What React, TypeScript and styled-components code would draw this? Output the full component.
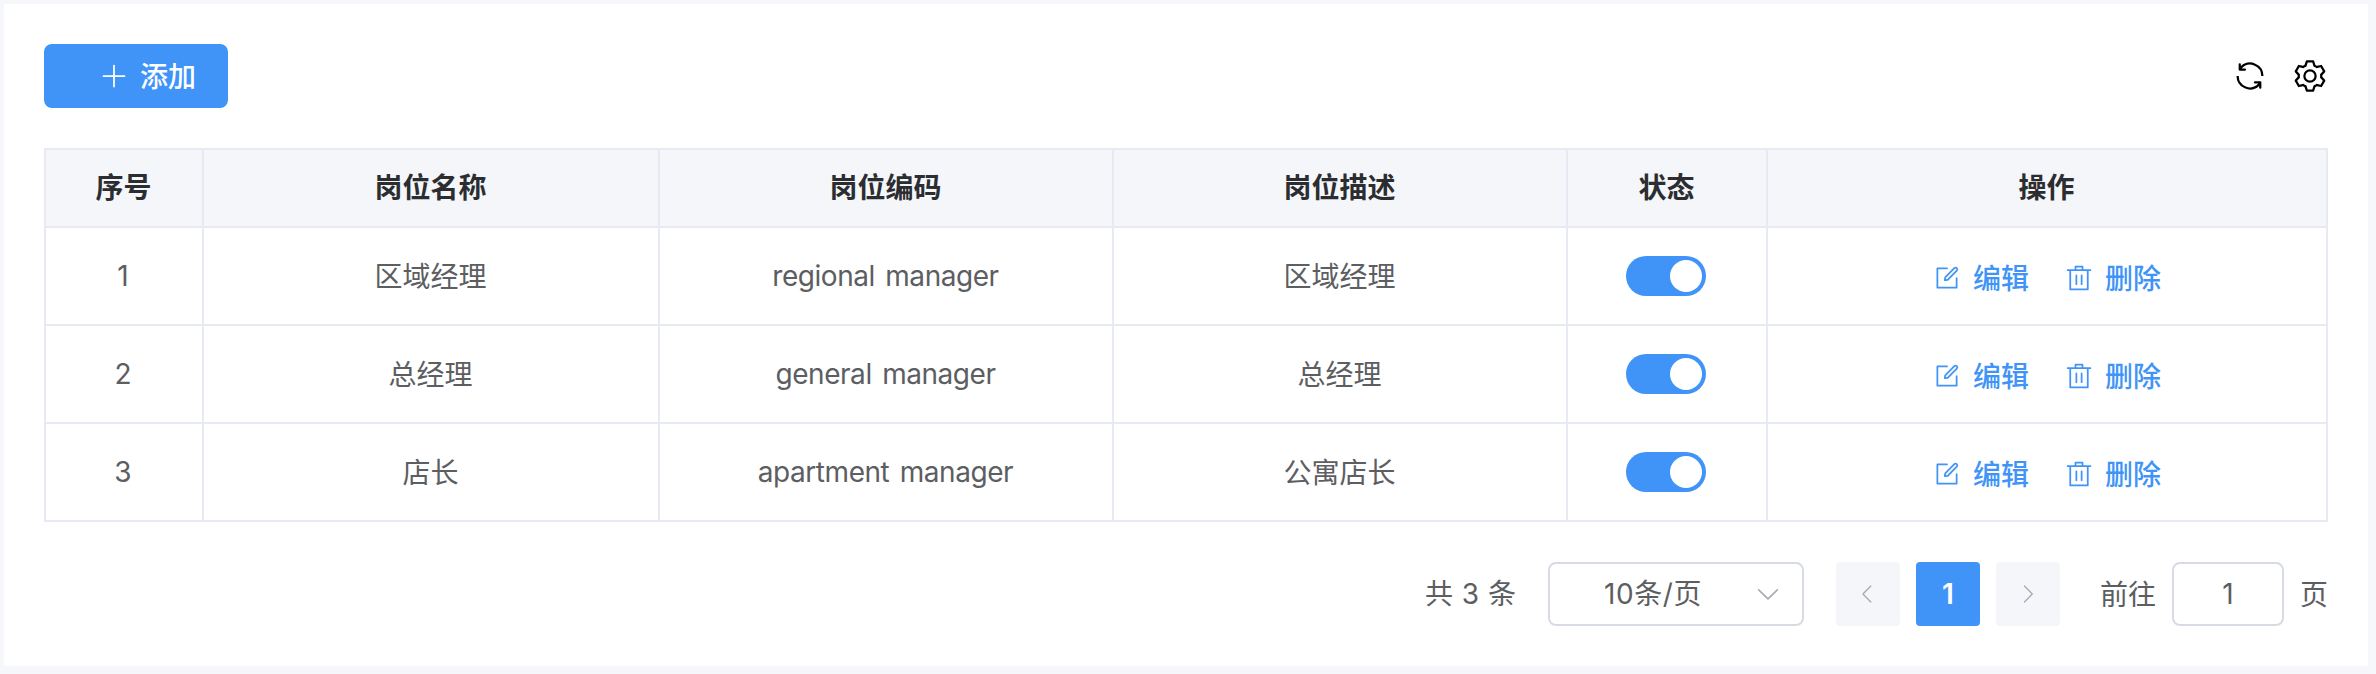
import React from "react";
import styled, { createGlobalStyle } from "styled-components";

const GlobalStyle = createGlobalStyle`
  * { box-sizing: border-box; }
  body {
    margin: 0;
    background: #f5f7fa;
    font-family: Inter, "Noto Sans CJK SC", sans-serif;
    font-size: 28px;
    line-height: 46px;
    color: #5c5e62;
  }
`;

const Card = styled.main`
  width: 2364px;
  height: 662px;
  margin: 4px 0 0 4px;
  padding: 40px;
  background: #fff;
`;

const Toolbar = styled.header`
  display: flex;
  align-items: center;
  justify-content: space-between;
  height: 64px;
  margin-bottom: 40px;
`;

const AddButton = styled.button`
  display: flex;
  align-items: center;
  width: 184px;
  height: 64px;
  padding: 0 0 0 56px;
  gap: 12px;
  border: 0;
  border-radius: 8px;
  background: #4094f7;
  color: #fff;
  font: inherit;
  font-weight: 500;
`;

const Tools = styled.div`
  display: flex;
  gap: 24px;
  color: #000;
`;

const Icon = styled.svg<{ $size: number }>`
  display: block;
  flex: none;
  width: ${(p) => p.$size}px;
  height: ${(p) => p.$size}px;
  fill: currentColor;
`;

const Label = styled.span`
  padding-top: 2px;
`;

const Table = styled.table`
  width: 2284px;
  border-collapse: separate;
  border-spacing: 0;
  table-layout: fixed;
  border-top: 2px solid #e8eaf3;
  border-left: 2px solid #e8eaf3;
`;

const HeadCell = styled.th`
  height: 78px;
  padding: 0 1px 0 0;
  border-right: 2px solid #e8eaf3;
  border-bottom: 2px solid #e8eaf3;
  background: #f4f6fa;
  color: #2b2d30;
  font-weight: 600;
`;

const Cell = styled.td`
  height: 98px;
  padding: 0 2px 0 0;
  border-right: 2px solid #e8eaf3;
  border-bottom: 2px solid #e8eaf3;
  text-align: center;
`;

const NameCell = styled(Cell)`
  padding-top: 2px;
  padding-right: 1px;
`;

const CodeCell = styled(Cell)`
  padding-right: 1px;
  letter-spacing: -0.45px;
  word-spacing: 3px;
`;

const ActionCell = styled(Cell)`
  padding-right: 0;
`;

const Switch = styled.button`
  display: flex;
  justify-content: flex-end;
  align-items: center;
  width: 80px;
  height: 40px;
  margin: 0 auto;
  padding: 0 4px;
  border: 0;
  border-radius: 20px;
  background: #4094f7;
`;

const Knob = styled.span`
  width: 32px;
  height: 32px;
  border-radius: 50%;
  background: #fff;
`;

const Actions = styled.div`
  display: flex;
  justify-content: center;
  gap: 36px;
  padding-top: 4px;
`;

const Action = styled.a`
  display: flex;
  align-items: center;
  gap: 12px;
  color: #4094f7;
  font-weight: 500;
`;

const Pagination = styled.footer`
  display: flex;
  align-items: center;
  justify-content: flex-end;
  height: 64px;
  margin-top: 40px;
`;

const Total = styled.span`
  margin-right: 32px;
  word-spacing: 1px;
`;

const Select = styled.div`
  display: flex;
  align-items: center;
  justify-content: space-between;
  width: 256px;
  height: 64px;
  padding: 0 20px 0 54px;
  margin-right: 32px;
  border: 2px solid #d7dbe4;
  border-radius: 8px;
  letter-spacing: 0.6px;
  svg { color: #a8abb2; }
`;

const PageButton = styled.button<{ $active?: boolean }>`
  display: flex;
  align-items: center;
  justify-content: center;
  width: 64px;
  height: 64px;
  padding: 0;
  border: 0;
  border-radius: 4px;
  background: ${(p) => (p.$active ? "#4094f7" : "#f4f6fa")};
  color: ${(p) => (p.$active ? "#fff" : "#a8abb2")};
  font: inherit;
  font-weight: ${(p) => (p.$active ? 600 : 400)};
`;

const Pager = styled.div`
  display: flex;
  gap: 16px;
  margin-right: 40px;
`;

const JumpInput = styled.div`
  display: flex;
  align-items: center;
  justify-content: center;
  width: 112px;
  height: 64px;
  margin: 0 16px;
  border: 2px solid #d7dbe4;
  border-radius: 8px;
`;

const ICONS = {
  plus: "M480 480V128a32 32 0 0 1 64 0v352h352a32 32 0 1 1 0 64H544v352a32 32 0 1 1-64 0V544H128a32 32 0 0 1 0-64z",
  refresh:
    "M771.776 794.88A384 384 0 0 1 128 512h64a320 320 0 0 0 555.712 216.448H654.72a32 32 0 1 1 0-64h149.056a32 32 0 0 1 32 32v148.928a32 32 0 1 1-64 0v-50.56zM276.288 295.616h92.992a32 32 0 0 1 0 64H220.16a32 32 0 0 1-32-32V178.56a32 32 0 0 1 64 0v50.56A384 384 0 0 1 896.128 512h-64a320 320 0 0 0-555.776-216.384z",
  setting:
    "M600.704 64a32 32 0 0 1 30.464 22.208l35.2 109.376c14.784 7.232 28.928 15.36 42.432 24.512l112.384-24.192a32 32 0 0 1 34.432 15.36L944.32 364.8a32 32 0 0 1-4.032 37.504l-77.12 85.12a357.12 357.12 0 0 1 0 49.024l77.12 85.248a32 32 0 0 1 4.032 37.504l-88.704 153.6a32 32 0 0 1-34.432 15.296L708.8 803.904c-13.44 9.088-27.648 17.28-42.368 24.512l-35.264 109.376A32 32 0 0 1 600.704 960H423.296a32 32 0 0 1-30.464-22.208L357.696 828.48a351.616 351.616 0 0 1-42.56-24.64l-112.32 24.256a32 32 0 0 1-34.432-15.36L79.68 659.2a32 32 0 0 1 4.032-37.504l77.12-85.248a357.12 357.12 0 0 1 0-48.896l-77.12-85.248A32 32 0 0 1 79.68 364.8l88.704-153.6a32 32 0 0 1 34.432-15.296l112.32 24.256c13.568-9.152 27.776-17.408 42.56-24.64l35.2-109.312A32 32 0 0 1 423.232 64H600.64zm-23.424 64H446.72l-36.352 113.088-24.512 11.968a294.113 294.113 0 0 0-34.816 20.096l-22.656 15.36-116.224-25.088-65.28 113.152 79.68 88.192-1.92 27.136a293.12 293.12 0 0 0 0 40.192l1.92 27.136-79.808 88.192 65.344 113.152 116.224-25.024 22.656 15.296a294.113 294.113 0 0 0 34.816 20.096l24.512 11.968L446.72 896h130.688l36.48-113.152 24.448-11.904a288.282 288.282 0 0 0 34.752-20.096l22.592-15.296 116.288 25.024 65.28-113.152-79.744-88.192 1.92-27.136a293.12 293.12 0 0 0 0-40.256l-1.92-27.136 79.808-88.128-65.344-113.152-116.288 24.96-22.592-15.232a287.616 287.616 0 0 0-34.752-20.096l-24.448-11.904L577.344 128zM512 320a192 192 0 1 1 0 384 192 192 0 0 1 0-384m0 64a128 128 0 1 0 0 256 128 128 0 0 0 0-256",
  edit: "M832 512a32 32 0 1 1 64 0v352a32 32 0 0 1-32 32H160a32 32 0 0 1-32-32V160a32 32 0 0 1 32-32h352a32 32 0 0 1 0 64H192v640h640zM469.952 554.24l52.8-7.552L847.104 222.4a32 32 0 1 0-45.248-45.248L477.44 501.44l-7.552 52.8zm422.4-422.4a96 96 0 0 1 0 135.808l-331.84 331.84a32 32 0 0 1-18.112 9.088L436.8 623.68a32 32 0 0 1-36.224-36.224l15.104-105.6a32 32 0 0 1 9.024-18.112l331.904-331.84a96 96 0 0 1 135.744 0z",
  trash:
    "M352 192V95.936a32 32 0 0 1 32-32h256a32 32 0 0 1 32 32V192h256a32 32 0 1 1 0 64H96a32 32 0 0 1 0-64zm64 0h192v-64H416zM192 960a32 32 0 0 1-32-32V256h704v672a32 32 0 0 1-32 32zm608-64V256H224v640zM416 768a32 32 0 0 1-32-32V416a32 32 0 0 1 64 0v320a32 32 0 0 1-32 32m192 0a32 32 0 0 1-32-32V416a32 32 0 0 1 64 0v320a32 32 0 0 1-32 32",
  down: "M831.872 340.864 512 652.672 192.128 340.864a30.592 30.592 0 0 0-42.752 0 29.12 29.12 0 0 0 0 41.6L489.664 714.24a32 32 0 0 0 44.672 0l340.288-331.712a29.12 29.12 0 0 0 0-41.728 30.592 30.592 0 0 0-42.752 0z",
  left: "M609.408 149.376 277.76 489.6a32 32 0 0 0 0 44.672l331.648 340.352a29.12 29.12 0 0 0 41.728 0 30.592 30.592 0 0 0 0-42.752L339.264 511.936l311.872-319.872a30.592 30.592 0 0 0 0-42.688 29.12 29.12 0 0 0-41.728 0z",
  right:
    "M340.864 149.312a30.592 30.592 0 0 0 0 42.752L652.736 512 340.864 831.872a30.592 30.592 0 0 0 0 42.752 29.12 29.12 0 0 0 41.728 0L714.24 534.336a32 32 0 0 0 0-44.672L382.592 149.376a29.12 29.12 0 0 0-41.728 0z",
};

const Glyph = ({ name, size }: { name: keyof typeof ICONS; size: number }) => (
  <Icon $size={size} viewBox="0 0 1024 1024" aria-hidden="true">
    <path d={ICONS[name]} fillRule="evenodd" />
  </Icon>
);

const COLUMNS = [
  { title: "序号", width: 158 },
  { title: "岗位名称", width: 456 },
  { title: "岗位编码", width: 454 },
  { title: "岗位描述", width: 454 },
  { title: "状态", width: 200 },
  { title: "操作", width: 560 },
];

const ROWS = [
  { name: "区域经理", code: "regional manager", description: "区域经理" },
  { name: "总经理", code: "general manager", description: "总经理" },
  { name: "店长", code: "apartment manager", description: "公寓店长" },
];

export default function App() {
  return (
    <>
      <GlobalStyle />
      <Card>
        <Toolbar>
          <AddButton>
            <Glyph name="plus" size={28} />
            <Label>添加</Label>
          </AddButton>
          <Tools>
            <Glyph name="refresh" size={36} />
            <Glyph name="setting" size={36} />
          </Tools>
        </Toolbar>
        <Table>
          <colgroup>
            {COLUMNS.map((c) => (
              <col key={c.title} width={c.width} />
            ))}
          </colgroup>
          <thead>
            <tr>
              {COLUMNS.map((c) => (
                <HeadCell key={c.title}>{c.title}</HeadCell>
              ))}
            </tr>
          </thead>
          <tbody>
            {ROWS.map((row, i) => (
              <tr key={row.code}>
                <Cell>{i + 1}</Cell>
                <NameCell>{row.name}</NameCell>
                <CodeCell>{row.code}</CodeCell>
                <NameCell>{row.description}</NameCell>
                <Cell>
                  <Switch role="switch" aria-checked="true">
                    <Knob />
                  </Switch>
                </Cell>
                <ActionCell>
                  <Actions>
                    <Action>
                      <Glyph name="edit" size={28} />
                      <Label>编辑</Label>
                    </Action>
                    <Action>
                      <Glyph name="trash" size={28} />
                      <Label>删除</Label>
                    </Action>
                  </Actions>
                </ActionCell>
              </tr>
            ))}
          </tbody>
        </Table>
        <Pagination>
          <Total>共 3 条</Total>
          <Select>
            10条/页
            <Glyph name="down" size={28} />
          </Select>
          <Pager>
            <PageButton>
              <Glyph name="left" size={24} />
            </PageButton>
            <PageButton $active>1</PageButton>
            <PageButton>
              <Glyph name="right" size={24} />
            </PageButton>
          </Pager>
          <Label>前往</Label>
          <JumpInput>1</JumpInput>
          <Label>页</Label>
        </Pagination>
      </Card>
    </>
  );
}
